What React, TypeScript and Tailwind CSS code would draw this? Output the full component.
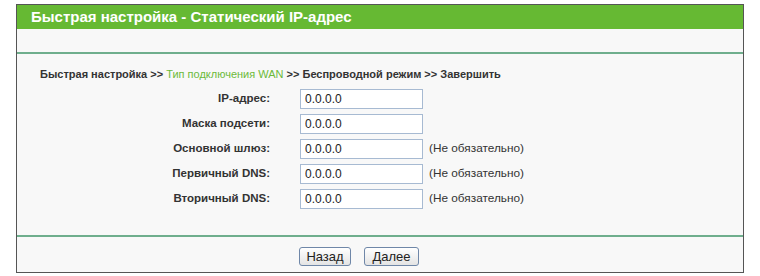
import React from 'react';

const rows = [
  { label: 'IP-адрес:', value: '0.0.0.0', note: '' },
  { label: 'Маска подсети:', value: '0.0.0.0', note: '' },
  { label: 'Основной шлюз:', value: '0.0.0.0', note: '(Не обязательно)' },
  { label: 'Первичный DNS:', value: '0.0.0.0', note: '(Не обязательно)' },
  { label: 'Вторичный DNS:', value: '0.0.0.0', note: '(Не обязательно)' },
];

export default function App() {
  return (
    <div className="w-[760px] h-[276px] bg-white pt-[4px] pl-[16px] font-['Liberation_Sans',Arial,sans-serif] text-[#333]">
      <div className="w-[728px] h-[269px] border border-[#555] bg-[#f8f8f8] flex flex-col">
        {/* Header */}
        <div className="h-[24px] bg-[#66b933] pl-[14px] flex items-center text-white font-bold text-[15px]">
          Быстрая настройка - Статический IP-адрес
        </div>
        <div className="h-[23px]" />
        <div className="h-[2px] bg-[#6fae8d]" />

        {/* Breadcrumb */}
        <div className="pl-[23px] pt-[14px] h-[35px] text-[11px] leading-[13px]">
          <span className="font-bold">Быстрая настройка &gt;&gt; </span>
          <span className="text-[#6cba3a]">Тип подключения WAN</span>
          <span className="font-bold"> &gt;&gt; Беспроводной режим &gt;&gt; Завершить</span>
        </div>

        {/* Form */}
        <div className="flex flex-col gap-[5px]">
          {rows.map((row) => (
            <div key={row.label} className="flex items-center h-[20px] text-[12px]">
              <div className="w-[253px] text-right font-bold text-[11.5px]">{row.label}</div>
              <input
                readOnly
                value={row.value}
                className="ml-[30px] w-[123px] h-[20px] border border-[#a7bad2] bg-white px-[4px] text-[12px] text-[#222] outline-none font-['Liberation_Sans',Arial,sans-serif]"
              />
              {row.note && <span className="ml-[6px] text-[11.8px]">{row.note}</span>}
            </div>
          ))}
        </div>

        <div className="h-[26px]" />
        <div className="h-[2px] bg-[#6fae8d]" />

        {/* Buttons */}
        <div className="flex gap-[13px] pl-[282px] pt-[10px]">
          <button className="w-[52px] h-[19px] rounded-[3px] border border-[#6f87a8] bg-gradient-to-b from-white to-[#e4e4e4] text-[13px] leading-[17px] text-[#222] font-['Liberation_Sans',Arial,sans-serif]">
            Назад
          </button>
          <button className="w-[55px] h-[19px] rounded-[3px] border border-[#6f87a8] bg-gradient-to-b from-white to-[#e4e4e4] text-[13px] leading-[17px] text-[#222] font-['Liberation_Sans',Arial,sans-serif]">
            Далее
          </button>
        </div>
      </div>
    </div>
  );
}
